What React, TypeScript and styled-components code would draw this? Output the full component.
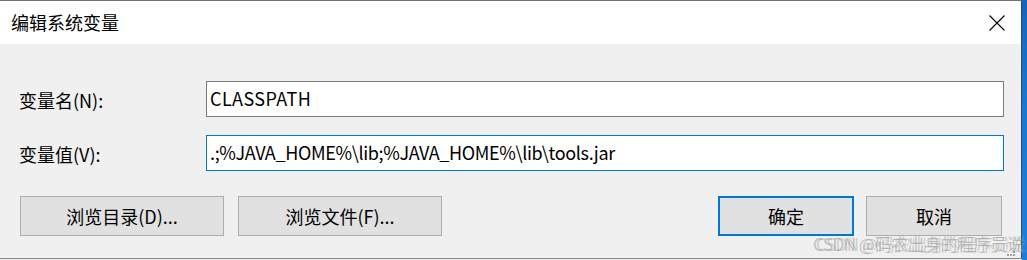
import React from "react";
import styled, { createGlobalStyle } from "styled-components";

const Global = createGlobalStyle`
  html, body { margin: 0; padding: 0; }
  body {
    width: 1027px; height: 260px; overflow: hidden;
    background: #f0f0f0;
    font-family: "Noto Sans CJK SC", "Noto Sans", sans-serif;
  }
`;

const Screen = styled.div`
  display: flex;
  width: 1027px;
  height: 260px;
`;

const Desktop = styled.div`
  flex: 1;
  background: linear-gradient(180deg, #1565b8 0%, #1a78d0 40%, #1f7fd8 100%);
`;

const Dialog = styled.div`
  position: relative;
  width: 1022px;
  height: 259px;
  box-sizing: border-box;
  border-top: 1px solid #727272;
  border-right: 1px solid #3a4a5c;
  border-bottom: 1px solid #8a8a8a;
  display: flex;
  flex-direction: column;
  background: #f0f0f0;
`;

const TitleBar = styled.div`
  height: 43px;
  flex: none;
  background: #ffffff;
  display: flex;
  align-items: center;
  justify-content: space-between;
  padding: 0 16px 0 11px;
`;

const Title = styled.span`
  font-size: 18px;
  color: #000;
  line-height: 1;
  margin-top: -1px;
`;

const Body = styled.div`
  flex: 1;
  padding: 37px 18px 0 19px;
  display: flex;
  flex-direction: column;
`;

const Form = styled.div`
  display: grid;
  grid-template-columns: 187px 798px;
  row-gap: 18px;
  align-items: center;
`;

const Label = styled.label`
  font-size: 18px;
  color: #000;
  line-height: 1;
  margin-top: 1px;
`;

const Field = styled.div<{ $focused?: boolean; $tracking?: number }>`
  height: 36px;
  box-sizing: border-box;
  border: 1px solid ${(p) => (p.$focused ? "#0078d7" : "#7a7a7a")};
  background: #fff;
  display: flex;
  align-items: center;
  padding: 0 0 2px 3px;
  font-size: 18px;
  letter-spacing: ${(p) => p.$tracking ?? 0}px;
  color: #000;
  white-space: nowrap;
`;

const ButtonRow = styled.div`
  margin-top: 25px;
  display: flex;
  align-items: center;
  padding-left: 1px;
`;

const Button = styled.div<{ $w: number; $default?: boolean; $gap?: number }>`
  width: ${(p) => p.$w}px;
  height: 40px;
  margin-left: ${(p) => p.$gap ?? 0}px;
  box-sizing: border-box;
  border: ${(p) => (p.$default ? "2px solid #0078d7" : "1px solid #adadad")};
  background: #e1e1e1;
  display: flex;
  align-items: center;
  justify-content: center;
  font-size: 18px;
  color: #000;
  padding-bottom: 1px;
`;

const Spacer = styled.div`
  flex: 1;
`;

const Watermark = styled.div`
  position: absolute;
  left: 813px;
  top: 230px;
  font-size: 17px;
  color: rgba(150, 150, 150, 0.55);
  text-shadow: 3px 0 0 rgba(150, 150, 150, 0.4);
  white-space: nowrap;
  letter-spacing: -0.5px;
`;

const Grip = styled.svg`
  position: absolute;
  right: 6px;
  bottom: 1px;
`;

export default function App() {
  return (
    <>
      <Global />
      <Screen>
        <Dialog>
          <TitleBar>
            <Title>编辑系统变量</Title>
            <svg width="16" height="16" viewBox="0 0 16 16">
              <path d="M0.5 0.5 L15.5 15.5 M15.5 0.5 L0.5 15.5" stroke="#000" strokeWidth="1.1" />
            </svg>
          </TitleBar>
          <Body>
            <Form>
              <Label>变量名(N):</Label>
              <Field $tracking={0.4}>CLASSPATH</Field>
              <Label>变量值(V):</Label>
              <Field $focused $tracking={-0.35}>.;%JAVA_HOME%\lib;%JAVA_HOME%\lib\tools.jar</Field>
            </Form>
            <ButtonRow>
              <Button $w={204}>浏览目录(D)...</Button>
              <Button $w={204} $gap={14}>浏览文件(F)...</Button>
              <Spacer />
              <Button $w={136} $default>确定</Button>
              <Button $w={136} $gap={12} style={{ marginRight: 1 }}>取消</Button>
            </ButtonRow>
          </Body>
          <Watermark>CSDN @码农出身的程序员说</Watermark>
          <Grip width="8" height="6" viewBox="0 0 8 6">
            <rect x="6" y="0" width="2" height="2" fill="#a0a0a0" />
            <rect x="3" y="3" width="2" height="2" fill="#a0a0a0" />
            <rect x="6" y="3" width="2" height="2" fill="#a0a0a0" />
            <rect x="0" y="3" width="2" height="2" fill="#a0a0a0" />
          </Grip>
        </Dialog>
        <Desktop />
      </Screen>
    </>
  );
}
